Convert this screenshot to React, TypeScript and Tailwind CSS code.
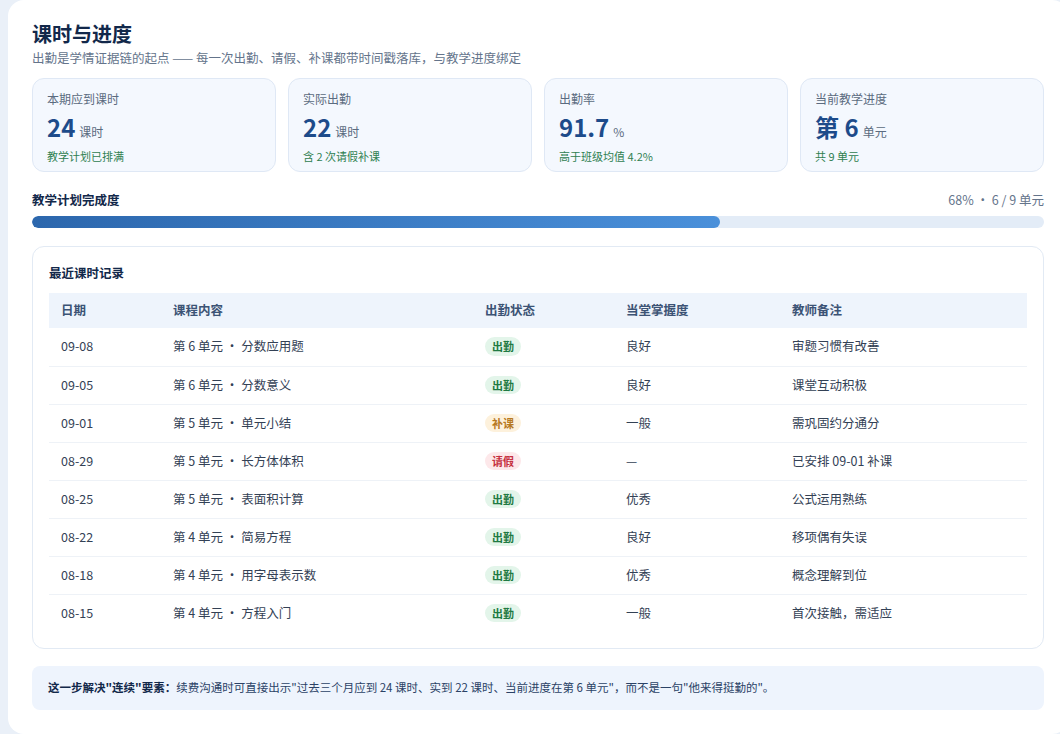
const stats = [
  { label: '本期应到课时', pre: '', value: '24', unit: '课时', sub: '教学计划已排满' },
  { label: '实际出勤', pre: '', value: '22', unit: '课时', sub: '含 2 次请假补课' },
  { label: '出勤率', pre: '', value: '91.7', unit: '%', sub: '高于班级均值 4.2%' },
  { label: '当前教学进度', pre: '第 ', value: '6', unit: '单元', sub: '共 9 单元' },
];

type Status = '出勤' | '补课' | '请假';

const rows: [string, string, Status, string, string][] = [
  ['09-08', '第 6 单元 · 分数应用题', '出勤', '良好', '审题习惯有改善'],
  ['09-05', '第 6 单元 · 分数意义', '出勤', '良好', '课堂互动积极'],
  ['09-01', '第 5 单元 · 单元小结', '补课', '一般', '需巩固约分通分'],
  ['08-29', '第 5 单元 · 长方体体积', '请假', '—', '已安排 09-01 补课'],
  ['08-25', '第 5 单元 · 表面积计算', '出勤', '优秀', '公式运用熟练'],
  ['08-22', '第 4 单元 · 简易方程', '出勤', '良好', '移项偶有失误'],
  ['08-18', '第 4 单元 · 用字母表示数', '出勤', '优秀', '概念理解到位'],
  ['08-15', '第 4 单元 · 方程入门', '出勤', '一般', '首次接触，需适应'],
];

const badge: Record<Status, string> = {
  出勤: 'bg-[#e3f5ea] text-[#1f7a43]',
  补课: 'bg-[#fdf1dc] text-[#b7791f]',
  请假: 'bg-[#fde8ea] text-[#c53040]',
};

export default function App() {
  return (
    <div
      className="w-[1060px] h-[734px] overflow-hidden bg-[#eaf0f8] pl-2"
      style={{ fontFamily: '"Noto Sans CJK SC", "Noto Sans", sans-serif' }}
    >
      <div className="w-[1060px] min-h-[734px] bg-white rounded-2xl px-6 pt-5 text-[#1e293b]">
        <h1 className="text-[20px] font-bold text-[#12284a] leading-7">课时与进度</h1>
        <p className="text-[12.5px] text-[#64748b] leading-5">
          出勤是学情证据链的起点 —— 每一次出勤、请假、补课都带时间戳落库，与教学进度绑定
        </p>

        <div className="grid grid-cols-4 gap-3 mt-[10px] w-[1012px]">
          {stats.map((s) => (
            <div key={s.label} className="h-[94px] rounded-xl border border-[#dfe8f5] bg-[#f4f8fe] px-[14px] pt-[12px]">
              <div className="text-[12px] text-[#5b6b80] leading-4">{s.label}</div>
              <div className="mt-[4px] flex items-baseline leading-8">
                <span className="text-[24px] font-bold text-[#1d4b8a]">
                  {s.pre}
                  {s.value}
                </span>
                <span className="ml-1 text-[12px] text-[#5b6b80]">{s.unit}</span>
              </div>
              <div className="text-[11px] text-[#2f8050] leading-4">{s.sub}</div>
            </div>
          ))}
        </div>

        <div className="w-[1012px] mt-[18px] flex justify-between items-center text-[12.5px] leading-5">
          <span className="font-bold text-[#12284a]">教学计划完成度</span>
          <span className="text-[#64748b]">68% · 6 / 9 单元</span>
        </div>
        <div className="w-[1012px] mt-[6px] h-3 rounded-full bg-[#e3ecf7] overflow-hidden">
          <div className="h-full w-[68%] rounded-full bg-gradient-to-r from-[#2c67ad] to-[#4a90da]" />
        </div>

        <div className="w-[1012px] mt-[18px] rounded-xl border border-[#e2eaf4] px-4 pt-4 pb-4">
          <div className="text-[12.5px] font-bold text-[#12284a] leading-5">最近课时记录</div>
          <table className="mt-[10px] w-full text-[12.5px] border-collapse">
            <thead>
              <tr className="bg-[#eef4fc] h-[35px] text-left text-[#3c5375]">
                <th className="pl-3 w-[112px] font-semibold">日期</th>
                <th className="pl-3 w-[312px] font-semibold">课程内容</th>
                <th className="pl-3 w-[141px] font-semibold">出勤状态</th>
                <th className="pl-3 w-[166px] font-semibold">当堂掌握度</th>
                <th className="pl-3 font-semibold">教师备注</th>
              </tr>
            </thead>
            <tbody>
              {rows.map((r) => (
                <tr key={r[0]} className="h-[38px] border-b border-[#eef2f7] last:border-b-0 text-[#334155]">
                  <td className="pl-3">{r[0]}</td>
                  <td className="pl-3">{r[1]}</td>
                  <td className="pl-3">
                    <span className={`inline-block rounded-full px-[7px] py-[1px] text-[11px] font-bold ${badge[r[2]]}`}>
                      {r[2]}
                    </span>
                  </td>
                  <td className="pl-3">{r[3]}</td>
                  <td className="pl-3">{r[4]}</td>
                </tr>
              ))}
            </tbody>
          </table>
        </div>

        <div className="w-[1012px] mt-[17px] rounded-lg bg-[#eef4fd] px-4 h-[44px] flex items-center text-[11.5px] text-[#2b4266]">
          <span className="font-bold text-[#12284a]">这一步解决"连续"要素：</span>
          续费沟通时可直接出示"过去三个月应到 24 课时、实到 22 课时、当前进度在第 6 单元"，而不是一句"他来得挺勤的"。
        </div>
      </div>
    </div>
  );
}
